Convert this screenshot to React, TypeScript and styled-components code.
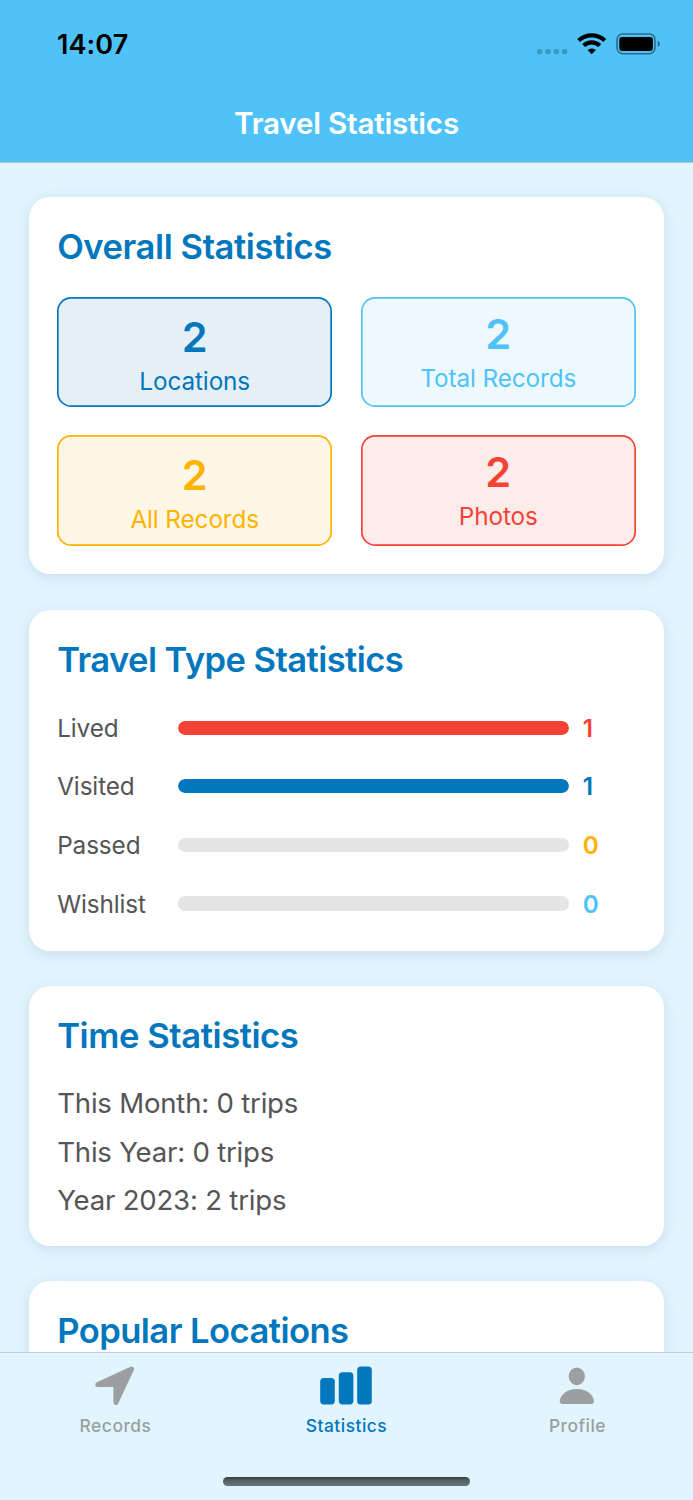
import React from 'react';
import styled, { createGlobalStyle } from 'styled-components';

const GlobalStyle = createGlobalStyle`
  * { box-sizing: border-box; }
  html, body { margin: 0; padding: 0; overflow: hidden; background: #e1f5fe; }
  body { font-family: Inter, 'Liberation Sans', sans-serif; }
`;

const Screen = styled.div`
  display: flex;
  flex-direction: column;
  width: 693px;
  height: 1500px;
  overflow: hidden;
  background: #e1f5fe;
`;

const Header = styled.header`
  flex: none;
  height: 163px;
  background: #4fc3f7;
  border-bottom: 1px solid #a5c4d3;
`;

const StatusBar = styled.div`
  display: flex;
  justify-content: space-between;
  align-items: center;
  height: 88px;
  padding: 0 33px 0 57px;
`;

const Clock = styled.span`
  padding-top: 2px;
  font-size: 27px;
  font-weight: 600;
  line-height: 32px;
  letter-spacing: 0.1px;
  color: #000;
`;

const HeaderTitle = styled.h1`
  margin: 0;
  padding-top: 14.5px;
  text-align: center;
  font-size: 29.6px;
  font-weight: 600;
  line-height: 40px;
  letter-spacing: -0.2px;
  color: #fff;
`;

const Content = styled.main`
  flex: 1;
  min-height: 0;
  overflow: hidden;
  display: flex;
  flex-direction: column;
  gap: 35.6px;
  padding: 34.4px 28.8px 0 28.8px;
`;

const Card = styled.section<{ $height: number }>`
  flex: none;
  height: ${(p) => p.$height}px;
  padding: 28px 28.4px;
  border-radius: 21.3px;
  background: #fff;
  box-shadow: 0 3.5px 14px rgba(0, 40, 70, 0.1);
`;

const CardTitle = styled.h2<{ $spacing: number }>`
  margin: 0;
  font-size: 34.6px;
  font-weight: 600;
  line-height: 42px;
  letter-spacing: ${(p) => p.$spacing}px;
  white-space: nowrap;
  color: #0277bd;
`;

const Tiles = styled.div`
  display: grid;
  grid-template-columns: 1fr 1fr;
  grid-auto-rows: 110.2px;
  gap: 28.5px;
  margin-top: 29.4px;
`;

const Tile = styled.div<{ $color: string; $fill: string; $top: number }>`
  display: flex;
  flex-direction: column;
  align-items: center;
  padding-top: ${(p) => p.$top}px;
  border-radius: 14.2px;
  background: ${(p) => p.$fill};
  box-shadow: inset 0 0 0 1.7px ${(p) => p.$color};
  color: ${(p) => p.$color};
`;

const TileNumber = styled.span`
  font-size: 41.5px;
  font-weight: 600;
  line-height: 50px;
`;

const TileLabel = styled.span`
  margin-top: 4px;
  font-size: 24.3px;
  line-height: 30px;
  letter-spacing: -0.1px;
`;

const TypeList = styled.div`
  display: flex;
  flex-direction: column;
  gap: 28.6px;
  margin-top: 33px;
`;

const TypeRow = styled.div`
  display: flex;
  align-items: center;
  height: 30px;
`;

const TypeName = styled.span`
  width: 121px;
  font-size: 24.3px;
  line-height: 30px;
  letter-spacing: -0.1px;
  color: #555;
`;

const Track = styled.div`
  width: 390.6px;
  height: 14.2px;
  border-radius: 7.1px;
  overflow: hidden;
  background: #e5e5e5;
`;

const Fill = styled.div<{ $color: string }>`
  height: 100%;
  border-radius: 7.1px;
  background: ${(p) => p.$color};
`;

const Count = styled.span<{ $color: string }>`
  margin-left: 14px;
  font-size: 24.3px;
  font-weight: 600;
  line-height: 30px;
  color: ${(p) => p.$color};
`;

const TimeList = styled.div`
  display: flex;
  flex-direction: column;
  margin-top: 22.6px;
`;

const TimeLine = styled.p`
  margin: 0;
  font-size: 27.6px;
  line-height: 48.6px;
  letter-spacing: -0.22px;
  white-space: nowrap;
  color: #555;
`;

const TabBar = styled.nav`
  flex: none;
  display: flex;
  flex-direction: column;
  height: 148px;
  border-top: 1px solid #bccfd8;
  background: #e1f5fe;
`;

const Tabs = styled.div`
  display: grid;
  grid-template-columns: repeat(3, 1fr);
`;

const Tab = styled.div<{ $active?: boolean }>`
  display: flex;
  flex-direction: column;
  align-items: center;
  padding-top: 11px;
  color: ${(p) => (p.$active ? '#0277bd' : '#9b9fa0')};
`;

const TabLabel = styled.span`
  margin-top: 10px;
  font-size: 17.4px;
  font-weight: 500;
  line-height: 20px;
  letter-spacing: 0.5px;
`;

const HomeIndicator = styled.div`
  width: 247px;
  height: 9px;
  margin: 41px auto 0;
  border-radius: 4.5px;
  background: linear-gradient(#353d40, #566064 35%, #697479);
`;

const StatusIcons = () => (
  <svg width="124" height="24" viewBox="0 0 124 24">
    <g fill="#000" fillOpacity="0.22">
      <rect x="1" y="17" width="5.4" height="5.2" rx="1.7" />
      <rect x="9.3" y="17" width="5.4" height="5.2" rx="1.7" />
      <rect x="17.6" y="17" width="5.4" height="5.2" rx="1.7" />
      <rect x="25.9" y="17" width="5.4" height="5.2" rx="1.7" />
    </g>
    <g fill="none" stroke="#000" strokeWidth="4.2">
      <path d="M42.6 8.5A19.2 19.2 0 0 1 68.8 8.5" />
      <path d="M47.6 13.6A11.7 11.7 0 0 1 63.8 13.6" />
    </g>
    <path d="M55.7 22.2L51.6 18.1A5.8 5.8 0 0 1 59.8 18.1Z" fill="#000" />
    <rect x="81" y="2" width="38" height="19.7" rx="5.7" fill="none" stroke="#000" strokeOpacity="0.45" strokeWidth="1.6" />
    <rect x="83.3" y="4.9" width="33.6" height="14" rx="2.8" fill="#000" />
    <path d="M121.8 8.7C124.4 9.8 124.4 13.9 121.8 15Z" fill="#000" fillOpacity="0.5" />
  </svg>
);

const ArrowIcon = () => (
  <svg width="42" height="42" viewBox="0 0 42 42" fill="currentColor" stroke="currentColor" strokeWidth="5" strokeLinejoin="round">
    <path d="M2.8 20.4L36.6 5L20.9 38.5V20.4Z" />
  </svg>
);

const BarsIcon = () => (
  <svg width="54" height="42" viewBox="0.8 0 54 42" fill="currentColor" overflow="visible">
    <rect x="1" y="14" width="14.6" height="26.4" rx="3.6" />
    <rect x="19.6" y="8.3" width="14.6" height="32.1" rx="3.6" />
    <rect x="38" y="2.4" width="14.6" height="38.2" rx="3.6" />
  </svg>
);

const PersonIcon = () => (
  <svg width="42" height="42" viewBox="0.7 0 42 42" fill="currentColor">
    <ellipse cx="20.5" cy="12.3" rx="8.1" ry="8.9" />
    <path d="M6.6 40C4.6 40 3.5 39 3.5 37.2C3.5 32.4 9.4 25 20.6 25S37.6 32.4 37.6 37.2C37.6 39 36.5 40 34.5 40Z" />
  </svg>
);

const tiles = [
  { value: 2, label: 'Locations', color: '#0277bd', fill: '#e5f0f6', top: 14.9 },
  { value: 2, label: 'Total Records', color: '#4fc3f7', fill: '#edf9fe', top: 12.2 },
  { value: 2, label: 'All Records', color: '#ffb300', fill: '#fff7e5', top: 14.7 },
  { value: 2, label: 'Photos', color: '#f44336', fill: '#feeceb', top: 11.8 },
];

const types = [
  { name: 'Lived', count: 1, color: '#f44336' },
  { name: 'Visited', count: 1, color: '#0277bd' },
  { name: 'Passed', count: 0, color: '#ffb300' },
  { name: 'Wishlist', count: 0, color: '#4fc3f7' },
];

const times = ['This Month: 0 trips', 'This Year: 0 trips', 'Year 2023: 2 trips'];

export default function App() {
  return (
    <Screen>
      <GlobalStyle />
      <Header>
        <StatusBar>
          <Clock>14:07</Clock>
          <StatusIcons />
        </StatusBar>
        <HeaderTitle>Travel Statistics</HeaderTitle>
      </Header>
      <Content>
        <Card $height={376.8}>
          <CardTitle $spacing={-0.42}>Overall Statistics</CardTitle>
          <Tiles>
            {tiles.map((t) => (
              <Tile key={t.label} $color={t.color} $fill={t.fill} $top={t.top}>
                <TileNumber>{t.value}</TileNumber>
                <TileLabel>{t.label}</TileLabel>
              </Tile>
            ))}
          </Tiles>
        </Card>
        <Card $height={341}>
          <CardTitle $spacing={-0.57}>Travel Type Statistics</CardTitle>
          <TypeList>
            {types.map((t) => (
              <TypeRow key={t.name}>
                <TypeName>{t.name}</TypeName>
                <Track>
                  <Fill $color={t.color} style={{ width: `${t.count * 100}%` }} />
                </Track>
                <Count $color={t.color}>{t.count}</Count>
              </TypeRow>
            ))}
          </TypeList>
        </Card>
        <Card $height={259.4}>
          <CardTitle $spacing={-0.42}>Time Statistics</CardTitle>
          <TimeList>
            {times.map((t) => (
              <TimeLine key={t}>{t}</TimeLine>
            ))}
          </TimeList>
        </Card>
        <Card $height={200}>
          <CardTitle $spacing={-0.55}>Popular Locations</CardTitle>
        </Card>
      </Content>
      <TabBar>
        <Tabs>
          <Tab>
            <ArrowIcon />
            <TabLabel>Records</TabLabel>
          </Tab>
          <Tab $active>
            <BarsIcon />
            <TabLabel>Statistics</TabLabel>
          </Tab>
          <Tab>
            <PersonIcon />
            <TabLabel>Profile</TabLabel>
          </Tab>
        </Tabs>
        <HomeIndicator />
      </TabBar>
    </Screen>
  );
}
